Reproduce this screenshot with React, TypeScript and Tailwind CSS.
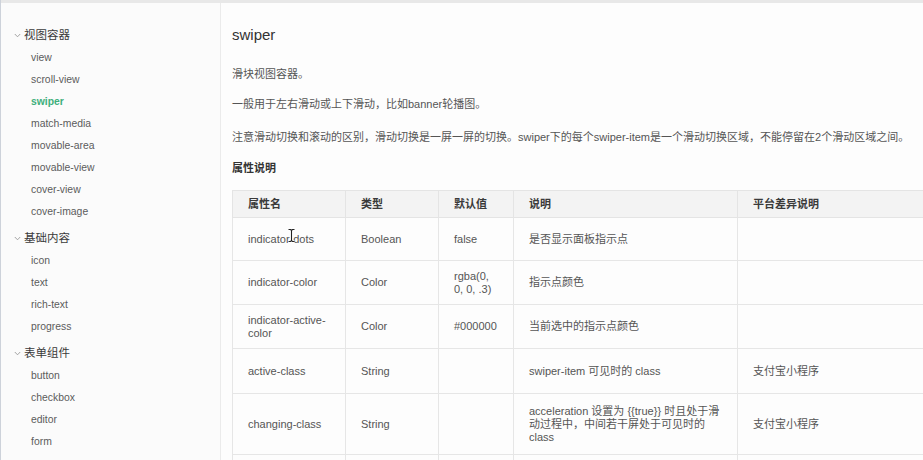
import React from 'react';

const font = { fontFamily: '"Liberation Sans", "Noto Sans CJK SC", sans-serif' };

/**
 * Sidebar groups
 */
const groups = [
    { title: '视图容器', items: ['view', 'scroll-view', 'swiper', 'match-media', 'movable-area', 'movable-view', 'cover-view', 'cover-image'] },
    { title: '基础内容', items: ['icon', 'text', 'rich-text', 'progress'] },
    { title: '表单组件', items: ['button', 'checkbox', 'editor', 'form'] },
];

const rows = [
    { name: 'indicator-dots', type: 'Boolean', def: 'false', desc: '是否显示面板指示点', platform: '', h: 'h-[43px]' },
    { name: 'indicator-color', type: 'Color', def: 'rgba(0, 0, 0, .3)', desc: '指示点颜色', platform: '', h: 'h-[44px]' },
    { name: 'indicator-active-color', type: 'Color', def: '#000000', desc: '当前选中的指示点颜色', platform: '', h: 'h-[44px]' },
    { name: 'active-class', type: 'String', def: '', desc: 'swiper-item 可见时的 class', platform: '支付宝小程序', h: 'h-[45px]' },
    { name: 'changing-class', type: 'String', def: '', desc: 'acceleration 设置为 {{true}} 时且处于滑动过程中，中间若干屏处于可见时的 class', platform: '支付宝小程序', h: 'h-[61px]' },
    // next row starts at the bottom edge, only its top border shows
    { name: '', type: '', def: '', desc: '', platform: '', h: 'h-[44px]' },
];

function Chevron() {
    return (
        <svg width="7" height="5" viewBox="0 0 7 5" className="mr-[3px]">
            <polyline points="0.8,1 3.5,3.8 6.2,1" fill="none" stroke="#9a9a9a" strokeWidth="0.9" />
        </svg>
    );
}

export default function App() {
    return (
        <div className="w-[923px] h-[460px] overflow-hidden bg-[#fdfdfd] border-l border-[#cdd2da] flex flex-col relative" style={font}>
            {/* top shadow */}
            <div className="h-[3px] bg-[#e8e8e8] shrink-0" />

            <div className="flex flex-1 min-h-0">
                {/* Sidebar */}
                <aside className="w-[220px] shrink-0 border-r border-[#ebebeb] bg-[#fbfbfb] pt-[21px]">
                    {groups.map((g, gi) => (
                        <div key={g.title} className={gi > 0 ? 'mt-[4px]' : ''}>
                            <div className="h-[23px] flex items-center pl-[13px] text-[11.5px] text-[#3a3a3a]">
                                <Chevron />
                                {g.title}
                            </div>
                            {g.items.map((item) => (
                                <div
                                    key={item}
                                    className={`h-[22px] flex items-center pl-[30px] text-[10.4px] ${item === 'swiper' ? 'text-[#3eaf7c] font-bold' : 'text-[#5c5c5c]'}`}
                                >
                                    {item}
                                </div>
                            ))}
                        </div>
                    ))}
                </aside>

                {/* Main content */}
                <main className="flex-1 min-w-0 pl-[11px] pt-[22px] text-[#555]">
                    <h1 className="text-[15px] leading-[20px] text-[#333] font-normal">swiper</h1>
                    <p className="mt-[21px] text-[11px] leading-[16px]">滑块视图容器。</p>
                    <p className="mt-[14px] text-[11px] leading-[16px]">一般用于左右滑动或上下滑动，比如banner轮播图。</p>
                    <p className="mt-[17px] text-[11px] leading-[16px] whitespace-nowrap">
                        注意滑动切换和滚动的区别，滑动切换是一屏一屏的切换。swiper下的每个swiper-item是一个滑动切换区域，不能停留在2个滑动区域之间。
                    </p>
                    <h2 className="mt-[15px] text-[11px] leading-[16px] font-bold text-[#333]">属性说明</h2>

                    <table className="mt-[14px] table-fixed border-collapse w-[735px] text-[11px] leading-[13px]">
                        <colgroup>
                            <col className="w-[113px]" />
                            <col className="w-[93px]" />
                            <col className="w-[75px]" />
                            <col className="w-[224px]" />
                            <col className="w-[230px]" />
                        </colgroup>
                        <thead>
                            <tr className="h-[27px] bg-[#f3f3f3]">
                                {['属性名', '类型', '默认值', '说明', '平台差异说明'].map((h) => (
                                    <th key={h} className="border border-[#e4e4e4] px-[15px] text-left font-bold text-[#3a3a3a]">
                                        {h}
                                    </th>
                                ))}
                            </tr>
                        </thead>
                        <tbody>
                            {rows.map((r, i) => (
                                <tr key={i} className={r.h}>
                                    <td className="border border-[#e6e6e6] px-[15px] align-middle">{r.name}</td>
                                    <td className="border border-[#e6e6e6] px-[15px] align-middle">{r.type}</td>
                                    <td className="border border-[#e6e6e6] px-[15px] align-middle">{r.def}</td>
                                    <td className="border border-[#e6e6e6] px-[15px] align-middle">{r.desc}</td>
                                    <td className="border border-[#e6e6e6] px-[15px] align-middle">{r.platform}</td>
                                </tr>
                            ))}
                        </tbody>
                    </table>
                </main>
            </div>

            {/* text cursor over the first cell */}
            <svg className="absolute left-[286px] top-[228px]" width="9" height="15" viewBox="0 0 9 15">
                <path d="M1.5 1.5h2l1 1 1-1h2M4.5 2.5v10M1.5 13.5h2l1-1 1 1h2" fill="none" stroke="#fff" strokeWidth="2.6" />
                <path d="M1.5 1.5h2l1 1 1-1h2M4.5 2.5v10M1.5 13.5h2l1-1 1 1h2" fill="none" stroke="#222" strokeWidth="1.1" />
            </svg>
        </div>
    );
}
